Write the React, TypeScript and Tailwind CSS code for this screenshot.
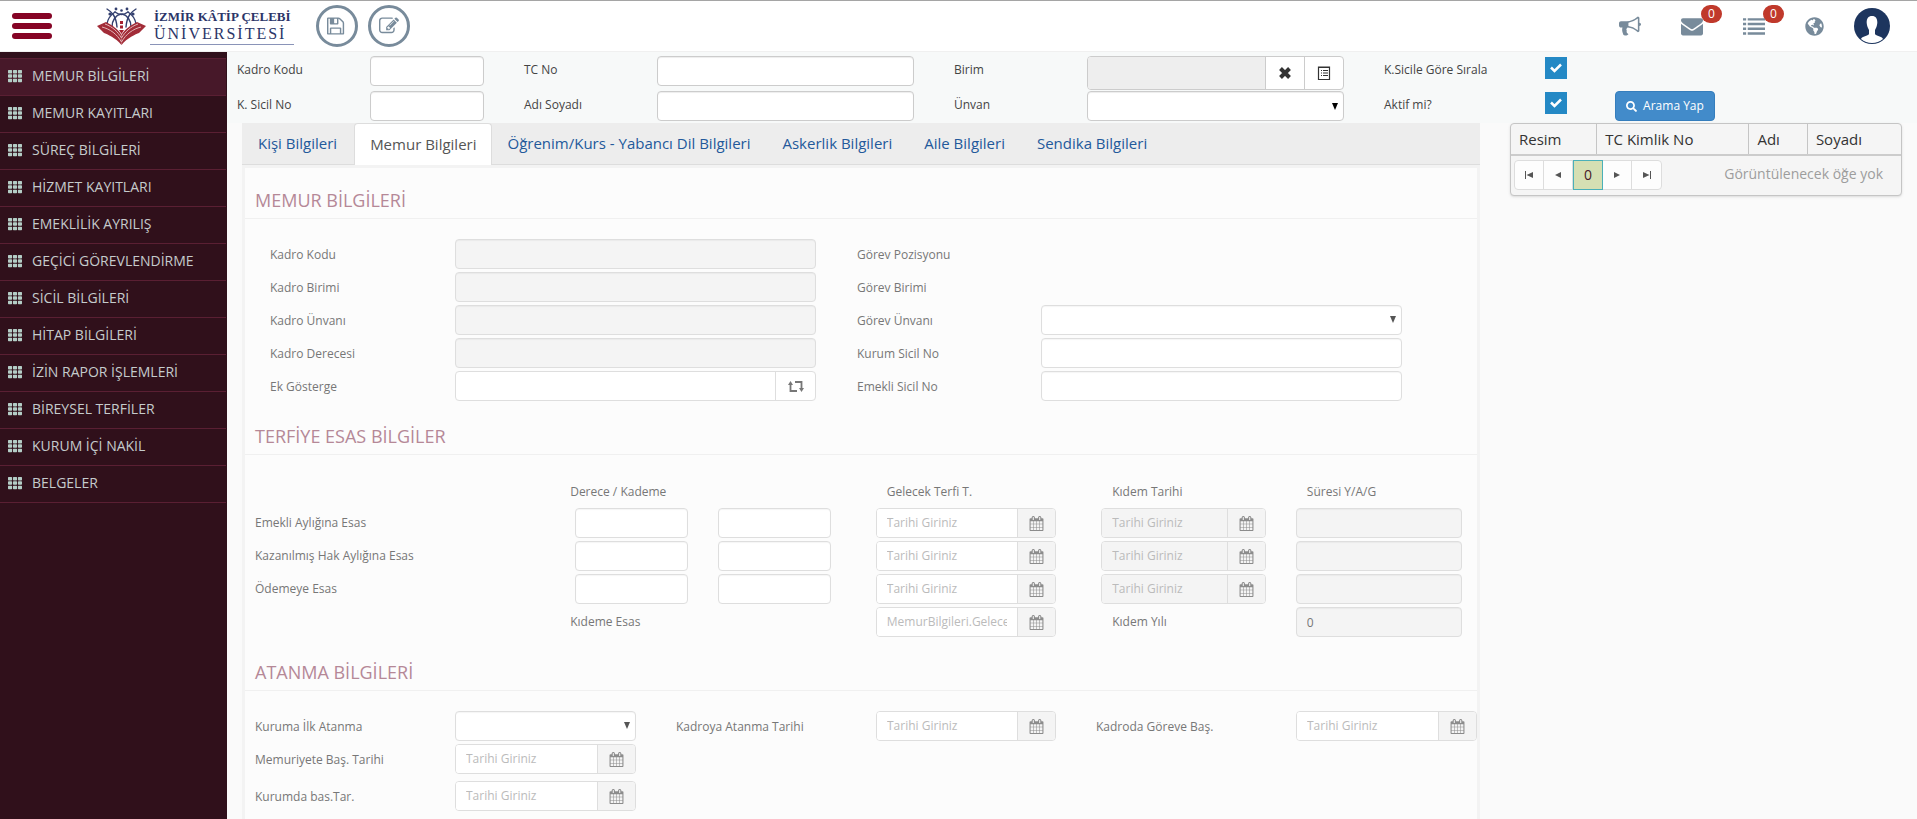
import type { ReactNode } from "react";
import { FaGlobeAmericas, FaSearch, FaTh } from "react-icons/fa";

const menu = [
  "MEMUR BİLGİLERİ",
  "MEMUR KAYITLARI",
  "SÜREÇ BİLGİLERİ",
  "HİZMET KAYITLARI",
  "EMEKLİLİK AYRILIŞ",
  "GEÇİCİ GÖREVLENDİRME",
  "SİCİL BİLGİLERİ",
  "HİTAP BİLGİLERİ",
  "İZİN RAPOR İŞLEMLERİ",
  "BİREYSEL TERFİLER",
  "KURUM İÇİ NAKİL",
  "BELGELER",
];

const tabs = [
  "Kişi Bilgileri",
  "Memur Bilgileri",
  "Öğrenim/Kurs - Yabancı Dil Bilgileri",
  "Askerlik Bilgileri",
  "Aile Bilgileri",
  "Sendika Bilgileri",
];

const icons = {
  save: "M384 1536h768v-384h-768v384zm896 0h128v-896q0-14-10-38.5t-20-34.5l-281-281q-10-10-34-20t-39-10v416q0 40-28 68t-68 28h-576q-40 0-68-28t-28-68v-416h-128v1280h128v-416q0-40 28-68t68-28h832q40 0 68 28t28 68v416zm-384-928v-320q0-13-9.5-22.5t-22.5-9.5h-192q-13 0-22.5 9.5t-9.5 22.5v320q0 13 9.5 22.5t22.5 9.5h192q13 0 22.5-9.5t9.5-22.5zm640 32v928q0 40-28 68t-68 28h-1344q-40 0-68-28t-28-68v-1344q0-40 28-68t68-28h928q40 0 88 20t76 48l280 280q28 28 48 76t20 88z",
  edit: "M888 1184l116-116-152-152-116 116v56h96v96h56zm440-720q-16-16-33 1l-350 350q-17 17-1 33t33-1l350-350q17-17 1-33zm80 594v190q0 119-84.5 203.5t-203.5 84.5h-832q-119 0-203.5-84.5t-84.5-203.5v-832q0-119 84.5-203.5t203.5-84.5h832q63 0 117 25 15 7 18 23 3 17-9 29l-49 49q-14 14-32 8-23-6-45-6h-832q-66 0-113 47t-47 113v832q0 66 47 113t113 47h832q66 0 113-47t47-113v-126q0-13 9-22l64-64q15-15 35-7t20 29zm-96-738l288 288-672 672h-288v-288zm444 132l-92 92-288-288 92-92q28-28 68-28t68 28l152 152q28 28 28 68t-28 68z",
  horn: "M1664 640q53 0 90.5 37.5t37.5 90.5-37.5 90.5-90.5 37.5v384q0 52-38 90t-90 38q-417-347-812-380-58 19-91 66t-31 100.5 40 92.5q-20 33-23 65.5t6 58 33.5 55 48 50 61.5 50.5q-29 58-111.5 83t-168.5 11.5-132-55.5q-7-23-29.5-87.5t-32-94.5-23-89-15-101 3.5-98.5 22-110.5h-122q-66 0-113-47t-47-113v-192q0-66 47-113t113-47h480q435 0 896-384 52 0 90 38t38 90v384zm-128 604v-954q-394 302-768 343v270q377 42 768 341z",
  mail: "M1792 710v794q0 66-47 113t-113 47h-1472q-66 0-113-47t-47-113v-794q44 49 101 87 362 246 497 345 57 42 92.5 65.5t94.5 48 110 24.5h2q51 0 110-24.5t94.5-48 92.5-65.5q170-123 498-345 57-39 100-87zm0-294q0 79-49 151t-122 123q-376 261-468 325-10 7-42.5 31t-54 38.5-52 32.5-57.5 27-50 9h-2q-23 0-50-9t-57.5-27-52-32.5-54-38.5-42.5-31q-91-64-262-182.5t-205-142.5q-62-42-117-115.5t-55-136.5q0-78 41.5-130t118.500-52h1472q65 0 112.500 47t47.500 113z",
  list: "M0 256h256v192h-256zM0 640h256v192h-256zM0 1024h256v192h-256zM0 1408h256v192h-256zM384 256h1408v192h-1408zM384 640h1408v192h-1408zM384 1024h1408v192h-1408zM384 1408h1408v192h-1408z",
  calendar: "M192 1664h288v-288h-288v288zm352 0h320v-288h-320v288zm-352-352h288v-320h-288v320zm352 0h320v-320h-320v320zm-352-384h288v-288h-288v288zm736 736h320v-288h-320v288zm-384-736h320v-288h-320v288zm768 736h288v-288h-288v288zm-384-352h320v-320h-320v320zm-352-864v-288q0-13-9.5-22.5t-22.5-9.5h-64q-13 0-22.5 9.5t-9.5 22.5v288q0 13 9.5 22.5t22.5 9.5h64q13 0 22.5-9.5t9.5-22.5zm736 864h288v-320h-288v320zm-384-384h320v-288h-320v288zm384 0h288v-288h-288v288zm32-480v-288q0-13-9.5-22.5t-22.5-9.5h-64q-13 0-22.5 9.5t-9.5 22.5v288q0 13 9.5 22.5t22.5 9.5h64q13 0 22.5-9.5t9.5-22.5zm384-64v1280q0 52-38 90t-90 38h-1408q-52 0-90-38t-38-90v-1280q0-52 38-90t90-38h128v-96q0-66 47-113t113-47h64q66 0 113 47t47 113v96h384v-96q0-66 47-113t113-47h64q66 0 113 47t47 113v96h128q52 0 90 38t38 90z",
};

function Icon({ d, className }: { d: string; className: string }) {
  return (
    <svg viewBox="0 0 1792 1792" className={className} fill="currentColor" aria-hidden="true">
      <path d={d} />
    </svg>
  );
}

function Logo() {
  return (
    <svg viewBox="0 0 49 38" className="h-[38px] w-[49px]" aria-hidden="true">
      <g fill="none" stroke="#34406f" strokeWidth="1.4" strokeLinecap="round">
        <path d="M10 2c5 3 9 7 10 18M39 2c-5 3-9 7-10 18" />
        <path d="M10 17c1-7 5-10 8-12M39 17c-1-7-5-10-8-12" />
        <path d="M15 20c0-7 4-12 9-13M34 20c0-7-4-12-9-13" />
        <path d="M18 5c4 3 9 3 13 0" />
      </g>
      <g fill="#34406f">
        <circle cx="13" cy="7" r="1.6" />
        <circle cx="36" cy="7" r="1.6" />
        <circle cx="19" cy="2" r="1.4" />
        <circle cx="30" cy="2" r="1.4" />
        <circle cx="24.5" cy="3.5" r="1.3" />
      </g>
      <path d="M0 19 9 15c6 3 12 7 15.5 13v10C19 31 10 27 7 26z" fill="#a22c38" />
      <path d="M49 19 40 15c-6 3-12 7-15.5 13v10C30 31 39 27 42 26z" fill="#a22c38" />
      <path d="M5 20c8 2 15 7 19.5 15M44 20c-8 2-15 7-19.5 15M8 17c8 3 13 8 16.5 14M41 17c-8 3-13 8-16.5 14" fill="none" stroke="#e3b6b8" strokeWidth="1" />
      <path d="M23 14h3v3h-3zM23 18.5h3v3h-3zM22 23h5l-2.5 4z" fill="#a6202f" />
    </svg>
  );
}

function Badge() {
  return (
    <span className="absolute -top-2.5 left-5 flex h-[18px] w-[21px] items-center justify-center rounded-full bg-[#c0392b] text-xs text-white">
      0
    </span>
  );
}

function Header() {
  return (
    <header className="flex h-[52px] items-center border-t border-b border-t-[#a5a5a5] border-b-[#f0f0f0] bg-white">
      <button aria-label="Menü" className="ml-3 flex w-10 flex-col gap-1">
        <span className="h-1.5 rounded-full bg-[#850425]" />
        <span className="h-1.5 rounded-full bg-[#850425]" />
        <span className="h-1.5 rounded-full bg-[#850425]" />
      </button>
      <a href="#" className="ml-[45px] flex items-center gap-1">
        <Logo />
        <span className="flex w-36 flex-col border-b border-[#8a94b8] pb-0.5 pl-1 font-['Liberation_Serif',serif] leading-[17px] whitespace-nowrap text-[#2b3568]">
          <span className="text-[13px] leading-[17px] font-semibold">İZMİR KÂTİP ÇELEBİ</span>
          <span className="text-base leading-[17px] tracking-[2px]">ÜNİVERSİTESİ</span>
        </span>
      </a>
      <div className="ml-[22px] flex gap-2.5 text-[#788b9b]">
        <button aria-label="Kaydet" className="flex size-[42px] items-center justify-center rounded-full border-3 border-[#788b9b]">
          <Icon d={icons.save} className="size-5" />
        </button>
        <button aria-label="Düzenle" className="flex size-[42px] items-center justify-center rounded-full border-3 border-[#788b9b]">
          <Icon d={icons.edit} className="size-5" />
        </button>
      </div>
      <nav className="mr-[27px] ml-auto flex items-center gap-10 text-[#788b9b]">
        <a href="#" aria-label="Duyurular">
          <Icon d={icons.horn} className="size-[22px]" />
        </a>
        <a href="#" aria-label="Mesajlar" className="relative">
          <Icon d={icons.mail} className="size-[22px]" />
          <Badge />
        </a>
        <a href="#" aria-label="Görevler" className="relative">
          <Icon d={icons.list} className="size-[22px]" />
          <Badge />
        </a>
        <a href="#" aria-label="Dil">
          <FaGlobeAmericas className="size-[19px]" />
        </a>
        <a href="#" aria-label="Profil" className="-ml-2.5">
          <svg viewBox="0 0 36 36" className="size-9" aria-hidden="true">
            <circle cx="18" cy="18" r="18" fill="#1d355e" />
            <path d="M18 8c4 0 5.5 3 5.300 7-.2 3-1.300 5-2.300 7v4c1 2 7 2 8 5a17 17 0 0 1-22 0c1-3 7-3 8-5v-4c-1-2-2.100-4-2.300-7C12.500 11 14 8 18 8z" fill="#fff" />
          </svg>
        </a>
      </nav>
    </header>
  );
}

function Sidebar() {
  return (
    <aside className="w-[227px] shrink-0 bg-[#30101b] pt-1.5">
      <ul className="mr-px">
        {menu.map((item, i) => (
          <li key={item}>
            <a
              href="#"
              className={
                i === 0
                  ? "flex h-[38px] items-center gap-2.5 border-y border-[#5a1f33] bg-[#471829] pb-0.5 pl-2 text-sm text-[#c5cbcc]"
                  : "flex h-[37px] items-center gap-2.5 border-b border-[#5a1f33] pb-0.5 pl-2 text-sm text-[#c5cbcc]"
              }
            >
              <FaTh className="size-3.5 text-[#b4cdc6]" />
              {item}
            </a>
          </li>
        ))}
      </ul>
    </aside>
  );
}

function SearchField({ id, label, children }: { id: string; label: string; children: ReactNode }) {
  return (
    <>
      <label htmlFor={id} className="pt-1.5 text-[#444]">
        {label}
      </label>
      {children}
    </>
  );
}

const searchInput = "h-[30px] w-full rounded-sm border border-[#ccc] bg-white px-2.5 shadow-[inset_0_1px_1px_rgba(0,0,0,0.075)]";

function CheckBox({ id }: { id: string }) {
  return (
    <span className="relative mt-px size-[22px]">
      <input id={id} type="checkbox" defaultChecked className="block size-[22px] appearance-none bg-[#2489c5]" />
      <svg viewBox="0 0 22 22" className="pointer-events-none absolute inset-0" fill="none" stroke="#fff" strokeWidth="2.5" aria-hidden="true">
        <path d="M6 10.5l3.500 3.500L16 7.500" />
      </svg>
    </span>
  );
}

function Arrow({ className }: { className: string }) {
  return (
    <svg viewBox="0 0 6 7" className={className} aria-hidden="true">
      <path d="M0 0h6L3 7z" fill="currentColor" />
    </svg>
  );
}

function SearchPanel() {
  return (
    <form className="grid h-[71px] grid-cols-[287fr_430fr_430fr_533fr] bg-[#f7f9f9] pt-1 pl-2.5">
      <div className="grid auto-rows-[30px] grid-cols-[133fr_154fr] content-start gap-y-[5px] *:[input]:w-[74%]">
        <SearchField id="kadroKodu" label="Kadro Kodu">
          <input id="kadroKodu" className={searchInput} />
        </SearchField>
        <SearchField id="kSicil" label="K. Sicil No">
          <input id="kSicil" className={searchInput} />
        </SearchField>
      </div>
      <div className="grid auto-rows-[30px] grid-cols-[133fr_257fr] content-start gap-y-[5px] pr-10">
        <SearchField id="tcNo" label="TC No">
          <input id="tcNo" className={searchInput} />
        </SearchField>
        <SearchField id="adSoyad" label="Adı Soyadı">
          <input id="adSoyad" className={searchInput} />
        </SearchField>
      </div>
      <div className="grid auto-rows-[30px] grid-cols-[133fr_257fr] content-start gap-y-[5px] pr-10">
        <SearchField id="birim" label="Birim">
          <div className="flex h-[34px] overflow-hidden rounded-sm border border-[#ccc] bg-white text-[#333]">
            <input id="birim" disabled className="min-w-0 flex-1 bg-[#eee] px-2.5" />
            <button type="button" aria-label="Temizle" className="flex w-[39px] items-center justify-center border-l border-[#ccc]">
              <svg viewBox="0 0 12 12" className="size-3" stroke="currentColor" strokeWidth="4" aria-hidden="true">
                <path d="M1.500 1.500l9 9M10.500 1.500l-9 9" />
              </svg>
            </button>
            <button type="button" aria-label="Listele" className="flex w-[39px] items-center justify-center border-l border-[#ccc]">
              <svg viewBox="0 0 14 14" className="size-3.5" fill="none" stroke="currentColor" aria-hidden="true">
                <path d="M1.500 1h11v12.500h-11zM1 1.500h12M4 4.500h1M4 7h1M4 9.500h1M6 4.500h5M6 7h5M6 9.500h5" strokeWidth="1.200" />
              </svg>
            </button>
          </div>
        </SearchField>
        <SearchField id="unvan" label="Ünvan">
          <div className="relative">
            <select id="unvan" className={searchInput + " appearance-none"} />
            <Arrow className="pointer-events-none absolute top-3 right-1.5 h-[7px] w-1.5 text-black" />
          </div>
        </SearchField>
      </div>
      <div className="grid auto-rows-[30px] grid-cols-[161px_70px_auto] content-start gap-y-[5px]">
        <SearchField id="sirala" label="K.Sicile Göre Sırala">
          <CheckBox id="sirala" />
        </SearchField>
        <span />
        <SearchField id="aktif" label="Aktif mi?">
          <CheckBox id="aktif" />
        </SearchField>
        <button type="button" className="flex w-[100px] items-center justify-center gap-1.5 rounded-sm border border-[#357ebd] bg-[#428bca] text-xs text-white">
          <FaSearch className="size-[11px]" />
          Arama Yap
        </button>
      </div>
    </form>
  );
}

function Section({ title, children }: { title: string; children: ReactNode }) {
  return (
    <section>
      <h2 className="h-[51px] border-b border-[#f0f0f0] pt-[22px] pl-2.5 text-lg leading-5 font-medium text-[#b58897]">{title}</h2>
      <div className="pt-5 pb-[3px]">{children}</div>
    </section>
  );
}

const box = "h-[30px] w-full min-w-0 rounded-sm border border-[#dedede] bg-white px-2.5 shadow-[inset_0_1px_1px_rgba(0,0,0,0.04)] disabled:bg-[#f4f4f4]";

function Select({ id }: { id: string }) {
  return (
    <div className="relative">
      <select id={id} className={box + " block appearance-none"} />
      <Arrow className="pointer-events-none absolute top-[11px] right-1.5 h-[7px] w-1.5 text-[#555]" />
    </div>
  );
}

function DateInput({ id, label, disabled, placeholder = "Tarihi Giriniz" }: { id: string; label?: string; disabled?: boolean; placeholder?: string }) {
  return (
    <div className="flex h-[30px] overflow-hidden rounded-sm border border-[#dedede]">
      <input
        id={id}
        aria-label={label}
        disabled={disabled}
        placeholder={placeholder}
        className="w-0 flex-1 bg-white px-2.5 placeholder:text-[#bbb] disabled:bg-[#f4f4f4]"
      />
      <button type="button" aria-label="Takvim" className="flex w-[38px] items-center justify-center border-l border-[#dedede] bg-[#f4f4f4] text-[#8c8c8c]">
        <Icon d={icons.calendar} className="size-[15px]" />
      </button>
    </div>
  );
}

function MemurBilgileri() {
  return (
    <Section title="MEMUR BİLGİLERİ">
      <div className="grid grid-cols-[185fr_361fr_41fr_184fr_361fr_75fr] items-center gap-y-[3px] pl-[25px] *:[label]:pt-0.5 *:[span]:pt-0.5">
        <label htmlFor="f1">Kadro Kodu</label>
        <input id="f1" disabled className={box} />
        <span className="col-start-4">Görev Pozisyonu</span>

        <label htmlFor="f2" className="col-start-1">Kadro Birimi</label>
        <input id="f2" disabled className={box} />
        <span className="col-start-4">Görev Birimi</span>

        <label htmlFor="f3" className="col-start-1">Kadro Ünvanı</label>
        <input id="f3" disabled className={box} />
        <label htmlFor="f4" className="col-start-4">Görev Ünvanı</label>
        <Select id="f4" />

        <label htmlFor="f5" className="col-start-1">Kadro Derecesi</label>
        <input id="f5" disabled className={box} />
        <label htmlFor="f6" className="col-start-4">Kurum Sicil No</label>
        <input id="f6" className={box} />

        <label htmlFor="f7" className="col-start-1">Ek Gösterge</label>
        <div className="flex h-[30px] rounded-sm border border-[#dedede] bg-white">
          <input id="f7" className="w-0 flex-1 px-2.5" />
          <button type="button" aria-label="Yenile" className="flex w-10 items-center justify-center border-l border-[#dedede] text-[#777]">
            <svg viewBox="0 0 16 11" className="h-[11px] w-4" fill="none" stroke="currentColor" strokeWidth="1.8" aria-hidden="true">
              <path d="M2.500 3v7H9M7 1h6.500v7" />
              <path d="M0 4 2.500 0 5 4zM11 7h5l-2.500 4z" fill="currentColor" stroke="none" />
            </svg>
          </button>
        </div>
        <label htmlFor="f8" className="col-start-4">Emekli Sicil No</label>
        <input id="f8" className={box} />
      </div>
    </Section>
  );
}

function TerfiBilgileri() {
  return (
    <Section title="TERFİYE ESAS BİLGİLER">
      <table className="-mb-[3px] w-full table-fixed text-left">
        <colgroup>
          <col className="w-[26.8%]" />
          <col className="w-[11.6%]" />
          <col className="w-[12.8%]" />
          <col className="w-[18.3%]" />
          <col className="w-[15.8%]" />
          <col />
        </colgroup>
        <thead>
          <tr className="h-[33px] *:font-normal">
            <th />
            <th colSpan={2}>
              <span className="-ml-[5px]">Derece / Kademe</span>
            </th>
            <th className="pl-[11px]">Gelecek Terfi T.</th>
            <th className="pl-[11px]">Kıdem Tarihi</th>
            <th className="pl-[11px]">Süresi Y/A/G</th>
          </tr>
        </thead>
        <tbody>
          {["Emekli Aylığına Esas", "Kazanılmış Hak Aylığına Esas", "Ödemeye Esas"].map((row, i) => (
            <tr key={row} className="h-[33px] *:pb-[3px]">
              <th className="pl-2.5 font-normal">{row}</th>
              <td className="pr-[30px]">
                <input aria-label={row + " derece"} className={box + " block"} />
              </td>
              <td className="pr-[45px]">
                <input aria-label={row + " kademe"} className={box + " block"} />
              </td>
              <td className="pr-[45px]">
                <DateInput id={"terfi" + i} label={row + " gelecek terfi"} />
              </td>
              <td className="pr-[30px]">
                <DateInput id={"kidem" + i} label={row + " kıdem tarihi"} disabled />
              </td>
              <td className="pr-[15px]">
                <input aria-label={row + " süresi"} disabled className={box + " block"} />
              </td>
            </tr>
          ))}
          <tr className="h-[33px] *:pb-[3px]">
            <td />
            <td colSpan={2}>
              <label htmlFor="kidemEsas" className="-ml-[5px]">Kıdeme Esas</label>
            </td>
            <td className="pr-[45px]">
              <DateInput id="kidemEsas" placeholder="MemurBilgileri.GelecekTerfi" />
            </td>
            <td className="pl-[11px]">
              <label htmlFor="kidemYili">Kıdem Yılı</label>
            </td>
            <td className="pr-[15px]">
              <input id="kidemYili" disabled defaultValue="0" className={box + " block"} />
            </td>
          </tr>
        </tbody>
      </table>
    </Section>
  );
}

function AtanmaBilgileri() {
  return (
    <Section title="ATANMA BİLGİLERİ">
      <div className="grid grid-cols-[200fr_181fr_40fr_200fr_180fr_40fr_200fr_181fr] items-center gap-y-[3px] pl-2.5 *:[label]:pt-0.5">
        <label htmlFor="a1">Kuruma İlk Atanma</label>
        <Select id="a1" />
        <label htmlFor="a2" className="col-start-4">Kadroya Atanma Tarihi</label>
        <DateInput id="a2" />
        <label htmlFor="a3" className="col-start-7">Kadroda Göreve Baş.</label>
        <DateInput id="a3" />

        <label htmlFor="a4" className="col-start-1">Memuriyete Baş. Tarihi</label>
        <DateInput id="a4" />

        <label htmlFor="a5" className="col-start-1 mt-1">Kurumda bas.Tar.</label>
        <div className="mt-1">
          <DateInput id="a5" />
        </div>
      </div>
    </Section>
  );
}

const pagerButton = "flex w-[29px] items-center justify-center border-r border-[#ddd] last:border-r-0";

function Results() {
  return (
    <div className="overflow-hidden rounded-sm border border-[#c5c5c5] bg-[#f5f5f5] text-[#333] shadow-sm">
      <table className="w-full table-fixed text-left text-[15px] leading-5">
        <thead>
          <tr className="h-[30px] *:border-l *:border-[#c5c5c5] *:pl-2 *:font-normal *:first:border-l-0">
            <th className="w-[22%]">Resim</th>
            <th className="w-[39%]">TC Kimlik No</th>
            <th className="w-[15%]">Adı</th>
            <th>Soyadı</th>
          </tr>
        </thead>
      </table>
      <div className="flex items-center justify-between border-t-2 border-[#ccc] pt-1 pb-[5px] pr-[18px] pl-[3px] text-sm">
        <div className="flex h-[30px] rounded-sm border border-[#ddd] bg-[#fdfdfd] text-[#555]">
          <button aria-label="İlk sayfa" className={pagerButton}>
            <svg viewBox="0 0 8 8" className="size-2" fill="currentColor"><path d="M0 0h1v8H0zM8 1v6L1.500 4z" /></svg>
          </button>
          <button aria-label="Önceki sayfa" className={pagerButton}>
            <svg viewBox="0 0 8 8" className="size-2" fill="currentColor"><path d="M7 1v6L1 4z" /></svg>
          </button>
          <span className="-my-px flex w-[30px] items-center justify-center border border-[#4bb0b8] bg-[#d5dfb3] text-[#471829]">0</span>
          <button aria-label="Sonraki sayfa" className={pagerButton}>
            <svg viewBox="0 0 8 8" className="size-2" fill="currentColor"><path d="M1 1v6l6-3z" /></svg>
          </button>
          <button aria-label="Son sayfa" className={pagerButton}>
            <svg viewBox="0 0 8 8" className="size-2" fill="currentColor"><path d="M7 0h1v8H7zM0 1v6l6.500-3z" /></svg>
          </button>
        </div>
        <span className="pb-0.5 text-[#9d9d9d]">Görüntülenecek öğe yok</span>
      </div>
    </div>
  );
}

export default function App() {
  return (
    <div className="flex min-h-screen flex-col bg-[#fafafa] font-['Open_Sans',sans-serif] text-xs">
      <Header />
      <div className="flex flex-1">
        <Sidebar />
        <main className="flex min-w-0 flex-1 flex-col">
          <SearchPanel />
          <div className="grid flex-1 grid-cols-[1238fr_392fr] gap-[30px] px-[15px]">
            <div className="flex flex-col">
              <nav className="flex h-[42px] border-b border-[#ddd] bg-[#ededed] pl-px text-[15px]">
                {tabs.map((tab, i) => (
                  <a
                    key={tab}
                    href="#"
                    className={
                      i === 1
                        ? "-mb-px flex items-center rounded-t-sm border border-b-0 border-[#ddd] bg-white px-[15px] pb-0.5 text-[#555]"
                        : "mr-0.5 flex items-center px-[15px] pb-0.5 text-[#23599b]"
                    }
                  >
                    {tab}
                  </a>
                ))}
              </nav>
              <div className="flex-1 border-3 border-b-0 border-[#f3f3f3] bg-[#fcfcfc] text-[#777]">
                <MemurBilgileri />
                <TerfiBilgileri />
                <AtanmaBilgileri />
              </div>
            </div>
            <div>
              <Results />
            </div>
          </div>
        </main>
      </div>
    </div>
  );
}
